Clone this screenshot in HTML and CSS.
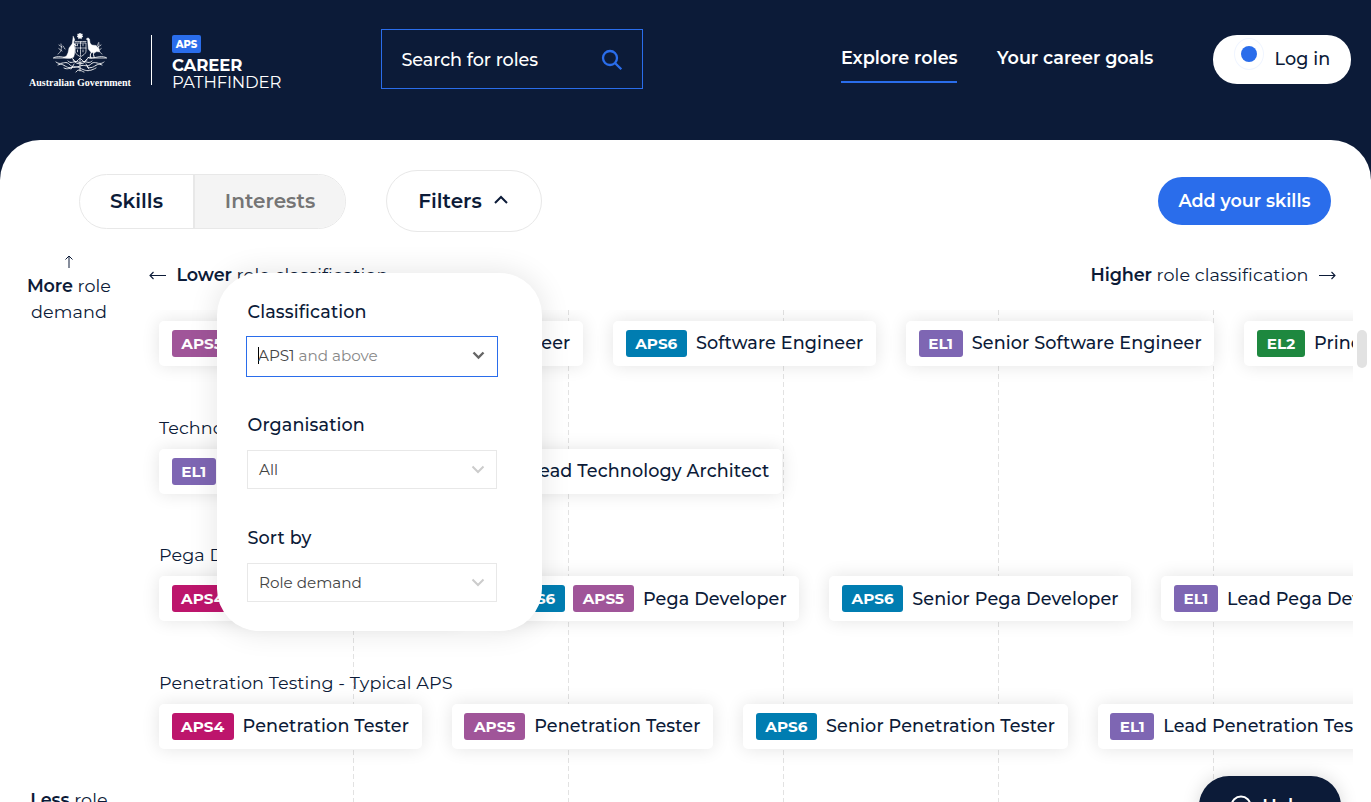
FILE: index.html
```html
<!DOCTYPE html>
<html lang="en">
<head>
<meta charset="utf-8">
<title>APS Career Pathfinder</title>
<link rel="stylesheet" href="styles.css">
</head>
<body>
<div class="page">
  <header class="header">
    <div class="gov">
      <svg class="crest" viewBox="0 0 54 40" fill="none" stroke="#fff" stroke-width=".7" stroke-linecap="round">
        <path d="M27 0l.7 1.300 1.600-.3-.5 1.500 1.200 1-1.500.6-.2 1.600-1.300-.9-1.300.9-.2-1.600-1.500-.6 1.200-1-.5-1.500 1.600.3z" fill="#fff"/>
        <path d="M22 8.500h11M22 10h11v8c0 3-3 4-5.500 6-2.500-2-5.500-3-5.500-6zM27.500 9v14M22 15h11M24.500 11v2M30 11v2M24.500 17v2M30 17v2" stroke-dasharray="1.800 .8"/>
        <path d="M20.300 3.300l.9 2 .6 1.800-1 1.400.2 3.500.9 4-.3 4.700-1 3.500-3 .8-5.100-.2-2.500-.4 3.500-1.400 1.500-3.300 1-4.700 3.200-4.300.5-3.700z" fill="#fff" stroke-width=".4"/>
        <path d="M20 10.500l3 2" stroke-width="1.200"/>
        <path d="M33.300 6l1.700-1.200 1.500 1.200.6 4 1.700 2 4.200.5 2.700 2.700 1 3.800-2.900-.4-2.300 1.200-3.400-.3-2.800-3.500-.3-4-.4-5z" fill="#fff" stroke-width=".4"/>
        <path d="M38.500 19l-1.300 3 .8 3M41 19l-.5 2.500.7 3" stroke-width="1"/>
        <path d="M1 24.500c7-3 11 2 18 0M35 24.500c7 2 11-3 18 0M0 25h18M36 25h18" stroke-width=".8"/>
        <path d="M5 21c3-2 4-5 3-10M49 21c-3-2-4-5-3-10M9 18l-4-3M9 14l-3-2M45 18l4-3M45 14l3-2M12 16l-2-3M44 13l2-4" stroke-dasharray="1.500 1"/>
        <path d="M3 29c5 4 9-2 13 2s6 4 11 2 7 2 11-2 8 2 13-2M5 32c6-3 8 5 15 2M49 32c-6-3-8 5-15 2M11 35c6 3 9-4 16 0s10 3 16 0M15 28c4 4 7-2 12 2 5-4 8 2 12-2M18 24l5 5 4-4 4 4 5-5M23 39c3-4 5-1 8 0M27 26v12M20 27c3 5 11 5 14 0M18 36l3-5M36 36l-3-5" stroke-width=".9" stroke-dasharray="1.800 .9"/>
      </svg>
      <span class="gov-name">Australian Government</span>
    </div>
    <div class="brand">
      <span class="brand-tag">APS</span>
      <span class="brand-a">CAREER</span>
      <span class="brand-b">PATHFINDER</span>
    </div>
    <div class="search">
      <span>Search for roles</span>
      <svg width="22" height="22" viewBox="0 0 22 22" fill="none" stroke="#2a6deb" stroke-width="2.300"><circle cx="9" cy="9" r="7"/><path d="M14 14l6.300 6.300"/></svg>
    </div>
    <nav class="nav">
      <a class="nav-link active">Explore roles</a>
      <a class="nav-link goals">Your career goals</a>
    </nav>
    <div class="login"><i class="dot"></i><span>Log in</span></div>
  </header>

  <main class="panel">
    <div class="toolbar">
      <div class="tabs"><span class="tab on">Skills</span><span class="tab off">Interests</span></div>
      <div class="filters"><span>Filters</span><svg width="14" height="9" viewBox="0 0 14 9" fill="none" stroke="#0c1b38" stroke-width="2"><path d="M1 8l6-6 6 6"/></svg></div>
      <div class="add">Add your skills</div>
    </div>
    <div class="body">
      <aside class="side">
        <svg width="10" height="13" viewBox="0 0 10 13" fill="none" stroke="#0c1b38" stroke-width="1"><path d="M5 13V1M1.500 4.500L5 1l3.500 3.500"/></svg>
        <div class="more"><b>More</b> role<br>demand</div>
        <div class="less"><b>Less</b> role<br>demand</div>
      </aside>
      <section class="chart">
        <div class="axis">
          <span class="axis-l"><svg width="18" height="10" viewBox="0 0 18 10" fill="none" stroke="#0c1b38" stroke-width="1.100"><path d="M17 5.500H1M4.500 2L1 5.500 4.500 9"/></svg><span><b>Lower</b> role classification</span></span>
          <span class="axis-r"><span><b>Higher</b> role classification</span><svg width="18" height="10" viewBox="0 0 18 10" fill="none" stroke="#0c1b38" stroke-width="1.100"><path d="M1 5.500h16M13.500 2L17 5.500 13.500 9"/></svg></span>
        </div>
        <div class="lanes">
          <div class="lane">
            <div class="cards">
              <div class="card wide"><i class="tag aps5">APS5</i><span>Software Engineer</span></div>
              <div class="card"><i class="tag aps6">APS6</i><span>Software Engineer</span></div>
              <div class="card"><i class="tag el1">EL1</i><span>Senior Software Engineer</span></div>
              <div class="card"><i class="tag el2">EL2</i><span>Principal Software Engineer</span></div>
            </div>
          </div>
          <div class="lane">
            <div class="label">Technology Architecture</div>
            <div class="cards">
              <div class="card tech"><i class="tag el1">EL1</i><span>Technology Architect</span></div>
              <div class="card"><i class="tag el2">EL2</i><span>Lead Technology Architect</span></div>
            </div>
          </div>
          <div class="lane low">
            <div class="label">Pega Development</div>
            <div class="cards">
              <div class="card pega"><i class="tag aps4">APS4</i><span>Junior Pega Developer</span></div>
              <div class="card"><i class="tag aps6">APS6</i><i class="tag aps5">APS5</i><span>Pega Developer</span></div>
              <div class="card"><i class="tag aps6">APS6</i><span>Senior Pega Developer</span></div>
              <div class="card"><i class="tag el1">EL1</i><span>Lead Pega Developer</span></div>
            </div>
          </div>
          <div class="lane">
            <div class="label">Penetration Testing - Typical APS</div>
            <div class="cards">
              <div class="card"><i class="tag aps4">APS4</i><span>Penetration Tester</span></div>
              <div class="card"><i class="tag aps5">APS5</i><span>Penetration Tester</span></div>
              <div class="card"><i class="tag aps6">APS6</i><span>Senior Penetration Tester</span></div>
              <div class="card"><i class="tag el1">EL1</i><span>Lead Penetration Tester</span></div>
            </div>
          </div>
        </div>
      </section>
    </div>
  </main>

  <div class="scroll-thumb"></div>

  <div class="popover">
    <div class="field">
      <label>Classification</label>
      <div class="select focus"><span><i class="caret"></i>APS1 <em>and above</em></span><svg width="14" height="9" viewBox="0 0 14 9" fill="none" stroke="#666" stroke-width="2.400"><path d="M1.500 1.500l5 5 5-5"/></svg></div>
    </div>
    <div class="field">
      <label>Organisation</label>
      <div class="select"><span>All</span><svg width="14" height="9" viewBox="0 0 14 9" fill="none" stroke="#ccc" stroke-width="2"><path d="M1.500 1.500L7 7l5.500-5.500"/></svg></div>
    </div>
    <div class="field">
      <label>Sort by</label>
      <div class="select"><span>Role demand</span><svg width="14" height="9" viewBox="0 0 14 9" fill="none" stroke="#ccc" stroke-width="2"><path d="M1.500 1.500L7 7l5.500-5.500"/></svg></div>
    </div>
  </div>

  <div class="help"><svg width="22" height="22" viewBox="0 0 22 22" fill="none" stroke="#fff" stroke-width="2"><circle cx="11" cy="11" r="9.500"/><path d="M8 12a3 3 0 1 1 3 3v1M11 17v1"/></svg><span>Help</span></div>
</div>
</body>
</html>
```

FILE: styles.css
```css
* { box-sizing: border-box; }
body { margin: 0; background: #0c1b38; color: #0c1b38; font-family: Montserrat, Inter, sans-serif; font-size: 17.6px; letter-spacing: .08px; }
i { font-style: normal; }
b { font-weight: 600; letter-spacing: -.1px; }
svg { flex: none; display: block; }
.page { position: relative; width: 1371px; height: 802px; overflow: hidden; }

.header { height: 140px; display: flex; align-items: flex-start; color: #fff; }
.gov { width: 102px; margin: 33px 0 0 29px; display: flex; flex-direction: column; align-items: center; }
.crest { width: 54px; height: 40px; }
.gov-name { font: 700 10px/14px "Liberation Serif", serif; letter-spacing: 0; margin-top: 3px; white-space: nowrap; }
.brand { margin: 35px 0 0 20px; height: 50px; width: 210px; padding-left: 20px; border-left: 1px solid #fff; display: flex; flex-direction: column; align-items: flex-start; }
.brand-tag { background: #2a6deb; border-radius: 2px; width: 29px; height: 18px; font-size: 10px; line-height: 19px; font-weight: 800; text-align: center; letter-spacing: 0; }
.brand-a { font-size: 16.5px; line-height: 17px; font-weight: 700; margin-top: 4px; letter-spacing: -.1px; }
.brand-b { font-size: 16.5px; line-height: 17px; font-weight: 400; letter-spacing: -.15px; }
.search { margin: 29px 0 0 20px; width: 262px; height: 60px; border: 1px solid #2a6deb; display: flex; align-items: center; justify-content: space-between; padding: 1px 19px 0 19.5px; font-weight: 500; font-size: 17.6px; letter-spacing: -.06px; }
.nav { display: flex; margin: 46px 0 0 198px; gap: 40px; font-weight: 600; letter-spacing: 0; }
.nav-link { height: 37px; line-height: 24px; font-size: 17.6px; white-space: nowrap; letter-spacing: -.02px; }
.nav-link.active { width: 116px; border-bottom: 2px solid #2a6deb; }
.nav-link.goals { width: 157px; }
.login { margin: 35px 0 0 59px; width: 138px; height: 49px; border-radius: 24px; background: #fff; color: #0c1b38; display: flex; align-items: center; font-size: 17.6px; line-height: 24px; font-weight: 500; padding: 0 0 1px 21px; gap: 10.5px; }
.dot { width: 30px; height: 32px; border: 1px solid #f0f5ff; border-radius: 50%; margin-top: -10px; display: flex; align-items: center; justify-content: center; }
.dot::before { content: ""; width: 16px; height: 16px; border-radius: 50%; background: #2a6deb; }

.panel { height: 662px; background: #fff; border-radius: 40px 40px 0 0; }
.toolbar { height: 108px; padding-top: 30px; display: flex; align-items: flex-start; font-size: 20px; font-weight: 600; letter-spacing: 0; }
.tabs { display: flex; margin: 4px 0 0 79px; width: 267px; height: 55px; border: 1px solid #e8e8e8; border-radius: 28px; overflow: hidden; line-height: 53px; text-align: center; }
.tab.on { width: 113px; }
.tab.off { flex: 1; background: #f4f4f4; border-left: 2px solid #e8e8e8; color: #757575; }
.filters { margin-left: 40px; width: 156px; height: 62px; border: 1px solid #e8e8e8; border-radius: 31px; display: flex; align-items: center; justify-content: center; gap: 12px; padding-right: 2px; }
.filters svg { margin-bottom: 3px; }
.add { margin: 7px 40px 0 auto; width: 173px; height: 48px; border-radius: 24px; background: #2a6deb; color: #fff; font-size: 17.6px; line-height: 48px; text-align: center; }

.body { display: flex; height: 554px; }
.side { width: 139px; padding-right: 1px; display: flex; flex-direction: column; align-items: center; text-align: center; line-height: 26px; padding-top: 7px; }
.more { margin-top: 5px; }
.less { margin-top: 462px; }
.chart { width: 1214px; height: 554px; }
.axis { height: 62px; padding: 14px 17px 0 10px; line-height: 26px; display: flex; justify-content: space-between; }
.axis-l, .axis-r { height: 26px; display: flex; align-items: center; gap: 9.5px; }
.lanes { height: 492px; overflow: hidden; padding: 11px 0 0 20px; background: repeating-linear-gradient(to bottom, transparent 0 5px, #fff 5px 8px), repeating-linear-gradient(to right, #fff 0 214px, #e2e2e2 214px 215px); }
.lane { height: 127.5px; display: flex; flex-direction: column; }
.label { height: 44px; margin-top: -44px; padding-top: 10px; line-height: 26px; white-space: nowrap; }
.cards { display: flex; gap: 30px; }
.card { flex: none; height: 45px; display: flex; align-items: center; padding: 0 12.6px; background: #fff; border-radius: 5px; box-shadow: 0 0 18px rgba(0,0,0,.11); font-weight: 500; letter-spacing: .12px; white-space: nowrap; }
.card span { margin-top: -2px; }
.low .card span { margin-top: 0; }
.card.wide { width: 424px; justify-content: space-between; }
.card.tech { width: 270px; }
.card.pega { width: 302px; }
.tag { flex: none; width: 61px; height: 27px; border-radius: 3px; margin-right: 9px; color: #fff; font-size: 15.2px; line-height: 27px; font-weight: 700; text-align: center; letter-spacing: 0; }
.tag + .tag { margin-left: -1px; }
.aps4 { background: #bd156c; width: 62px; }
.aps5 { background: #a05599; }
.aps6 { background: #007db1; width: 61.3px; }
.el1 { background: #7e66b3; width: 44.2px; }
.el2 { background: #1e883f; width: 48px; }

.scroll-thumb { position: absolute; left: 1357px; top: 330px; width: 10px; height: 38px; border-radius: 5px; background: #e2e2e2; }
.popover { position: absolute; left: 217px; top: 272.6px; width: 325px; height: 358.4px; background: #fff; border-radius: 42px; padding: 26.4px 45px 0 30px; box-shadow: 0 0 30px rgba(0,0,0,.11); }
.field { height: 113px; }
.field label { display: block; height: 38px; line-height: 26px; font-weight: 500; letter-spacing: .12px; padding-left: .5px; margin-bottom: 1px; }
.select { height: 39px; margin-top: -1px; border: 1px solid #e8e8e8; padding: 0 11px; display: flex; align-items: center; justify-content: space-between; font-size: 15.2px; color: #444; letter-spacing: 0; }
.select.focus { margin: -2px -1px; height: 41px; padding-bottom: 1px; border-color: #2a6deb; }
.select em { font-style: normal; color: #888; }
.caret { display: inline-block; width: 1px; height: 17px; margin-right: -1px; vertical-align: -3px; background: #000; }
.help { position: absolute; left: 1199px; top: 776px; width: 142px; height: 60px; border-radius: 30px; background: #0c1b38; color: #fff; display: flex; justify-content: center; align-items: center; gap: 10px; padding-right: 4px; font-weight: 600; font-size: 18px; box-shadow: 0 0 18px rgba(0,0,0,.15); }
```
